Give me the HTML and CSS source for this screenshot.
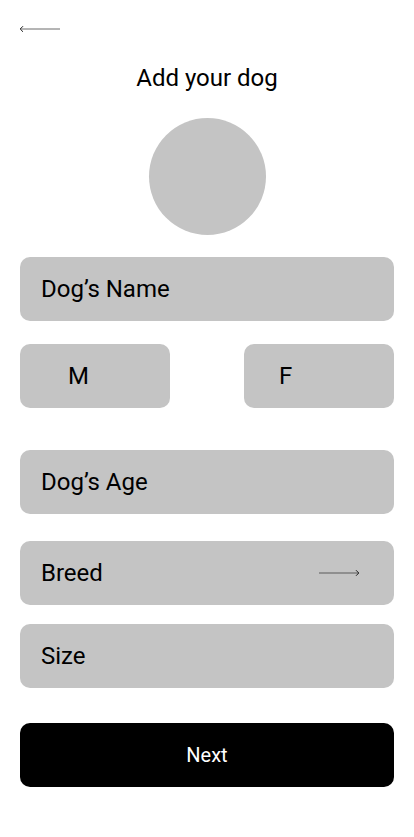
FILE: index.html
```html
<!DOCTYPE html>
<html>
<head>
<meta charset="utf-8">
<link rel="stylesheet" href="styles.css">
</head>
<body>
<div class="screen">
  <div class="top">
    <svg class="back" width="42" height="8" viewBox="0 0 42 8">
      <line x1="1.5" y1="4" x2="41" y2="4" stroke="#6a6a6a" stroke-width="1"/>
      <path d="M4 1.2 L1.2 4 L4 6.8" fill="none" stroke="#222" stroke-width="1"/>
    </svg>
  </div>
  <h1 class="title">Add your dog</h1>
  <div class="avatar"></div>
  <div class="field name">Dog’s Name</div>
  <div class="sex">
    <div class="field sex-m">M</div>
    <div class="field sex-f">F</div>
  </div>
  <div class="field age">Dog’s Age</div>
  <div class="field breed">
    <span>Breed</span>
    <svg class="fwd" width="42" height="8" viewBox="0 0 42 8">
      <line x1="1" y1="4" x2="40.5" y2="4" stroke="#5a5a5a" stroke-width="1"/>
      <path d="M38 1.2 L40.8 4 L38 6.8" fill="none" stroke="#222" stroke-width="1"/>
    </svg>
  </div>
  <div class="field size">Size</div>
  <div class="next">Next</div>
</div>
</body>
</html>
```
FILE: styles.css
```css
html, body {
  margin: 0;
  padding: 0;
  background: #fff;
}
body {
  font-family: Roboto, "Noto Sans", sans-serif;
  color: #000;
}
.screen {
  width: 414px;
  height: 837px;
  padding: 0 20px;
  box-sizing: border-box;
  display: flex;
  flex-direction: column;
}
.top {
  height: 56px;
  display: flex;
  align-items: flex-start;
}
.back {
  display: block;
  margin-top: 25px;
  margin-left: -1px;
}
.title {
  margin: 0;
  font-weight: 400;
  font-size: 24px;
  line-height: 44px;
  text-align: center;
}
.avatar {
  width: 117px;
  height: 117px;
  border-radius: 50%;
  background: #c4c4c4;
  align-self: center;
  margin-top: 18px;
}
.field {
  height: 64px;
  border-radius: 10px;
  background: #c4c4c4;
  display: flex;
  align-items: center;
  padding-left: 21px;
  box-sizing: border-box;
  font-size: 24px;
}
.name {
  margin-top: 22px;
}
.sex {
  margin-top: 23px;
  display: flex;
  justify-content: space-between;
}
.sex .field {
  width: 150px;
}
.sex-m {
  padding-left: 48px;
}
.sex-f {
  padding-left: 35px;
}
.age {
  margin-top: 42px;
}
.breed {
  margin-top: 27px;
  justify-content: space-between;
  padding-right: 34px;
}
.fwd {
  display: block;
}
.size {
  margin-top: 19px;
}
.next {
  margin-top: 35px;
  height: 64px;
  border-radius: 10px;
  background: #000;
  color: #fff;
  font-size: 20px;
  display: flex;
  align-items: center;
  justify-content: center;
}
```
